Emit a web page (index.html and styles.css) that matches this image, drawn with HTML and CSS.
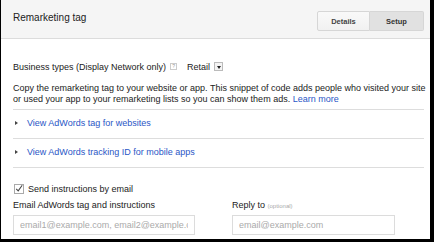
FILE: index.html
```html
<!DOCTYPE html>
<html lang="en">
<head>
  <meta charset="UTF-8">
  <title>Remarketing tag</title>
  <link rel="stylesheet" href="styles.css">
</head>
<body>
  <div class="panel">
    <div class="panel-header">
      <h2 class="title">Remarketing tag</h2>
      <div class="tabs">
        <button class="tab">Details</button>
        <button class="tab active">Setup</button>
      </div>
    </div>
    <div class="panel-body">
      <div class="biz-row">
        <span>Business types (Display Network only)</span>
        <span class="help">?</span>
        <span class="select">Retail <span class="select-arrow"></span></span>
      </div>
      <p class="intro">Copy the remarketing tag to your website or app. This snippet of code adds people who visited your site or used your app to your remarketing lists so you can show them ads. <a href="#">Learn more</a></p>
      <div class="expanders">
        <div class="expander"><span class="caret"></span><a href="#">View AdWords tag for websites</a></div>
        <div class="expander"><span class="caret"></span><a href="#">View AdWords tracking ID for mobile apps</a></div>
      </div>
      <label class="check-row">
        <span class="checkbox">
          <svg width="9" height="9" viewBox="0 0 10 10"><path d="M1.5 5.5 L4 8 L9 1" fill="none" stroke="#444" stroke-width="1.3"/></svg>
        </span>
        Send instructions by email
      </label>
      <div class="fields">
        <div class="field field-to">
          <div class="field-label">Email AdWords tag and instructions</div>
          <input type="text" placeholder="email1@example.com, email2@example.com">
        </div>
        <div class="field field-reply">
          <div class="field-label">Reply to <span class="optional">(optional)</span></div>
          <input type="text" placeholder="email@example.com">
        </div>
      </div>
    </div>
  </div>
</body>
</html>
```

FILE: styles.css
```css
html, body {
  margin: 0;
  background: #000;
}
body {
  font-family: "Liberation Sans", Arial, sans-serif;
  font-size: 9px;
  color: #222;
}
.panel {
  background: #fff;
  width: 429px;
  height: 239px;
  margin-left: 1px;
  overflow: hidden;
}
.panel-header {
  display: flex;
  justify-content: space-between;
  align-items: center;
  height: 38px;
  padding: 0 6px 0 12px;
  background: #f5f5f5;
  border-bottom: 1px solid #dcdcdc;
}
.title {
  margin: 0;
  padding-bottom: 4px;
  font-size: 10px;
  font-weight: normal;
  color: #222;
}
.tabs {
  display: flex;
  margin-top: 4px;
}
.tab {
  width: 53px;
  height: 20px;
  padding: 0;
  font-family: inherit;
  font-size: 7.5px;
  font-weight: bold;
  color: #444;
  background: linear-gradient(#f9f9f9, #f1f1f1);
  border: 1px solid #d6d6d6;
  border-radius: 2px 0 0 2px;
}
.tab.active {
  width: 54px;
  background: #e1e1e1;
  border-left: none;
  border-radius: 0 2px 2px 0;
  color: #333;
}
.panel-body {
  padding: 0 6px 0 12px;
}
.biz-row {
  display: flex;
  align-items: center;
  margin-top: 22px;
  height: 11px;
}
.help {
  display: inline-block;
  box-sizing: border-box;
  width: 7px;
  height: 7px;
  margin: 0 10px 0 4px;
  border: 1px solid #ccc;
  font-size: 5px;
  line-height: 5px;
  text-align: center;
  color: #999;
}
.select {
  display: inline-flex;
  align-items: center;
}
.select-arrow {
  display: inline-block;
  box-sizing: border-box;
  width: 9px;
  height: 9px;
  margin-left: 4px;
  border: 1px solid #bbb;
  background: #f4f4f4;
  position: relative;
}
.select-arrow::after {
  content: "";
  position: absolute;
  left: 1.5px;
  top: 2.5px;
  border-left: 2.5px solid transparent;
  border-right: 2.5px solid transparent;
  border-top: 3px solid #222;
}
.intro {
  margin: 11px -6px 0 0;
  line-height: 11px;
}
a {
  color: #2a56c6;
  text-decoration: none;
}
.expanders {
  margin-top: 4px;
}
.expander {
  display: flex;
  align-items: center;
  box-sizing: border-box;
  height: 29px;
  padding: 0 0 3px 2px;
  border-top: 1px solid #ddd;
}
.expander:last-child {
  height: 30px;
  border-bottom: 1px solid #ddd;
}
.caret {
  width: 0;
  height: 0;
  margin-right: 9px;
  border-top: 2px solid transparent;
  border-bottom: 2px solid transparent;
  border-left: 3px solid #444;
}
.check-row {
  display: flex;
  align-items: center;
  margin-top: 15px;
  height: 11px;
}
.checkbox {
  display: inline-flex;
  align-items: center;
  justify-content: center;
  box-sizing: border-box;
  width: 10px;
  height: 10px;
  margin: 0 4px 0 1px;
  border: 1px solid #aaa;
  background: #fff;
}
.fields {
  display: flex;
  margin-top: 6px;
}
.field-label {
  height: 11px;
  line-height: 11px;
  margin-bottom: 4px;
}
.field-to {
  width: 219px;
}
.optional {
  font-size: 6px;
  color: #aaa;
}
input {
  display: block;
  box-sizing: border-box;
  height: 20px;
  padding: 0 6px;
  font-family: inherit;
  font-size: 9px;
  color: #222;
  border: 1px solid #dcdcdc;
  outline: none;
}
.field-to input {
  width: 182px;
}
.field-reply input {
  width: 163px;
}
input::placeholder {
  color: #aaa;
}
```
